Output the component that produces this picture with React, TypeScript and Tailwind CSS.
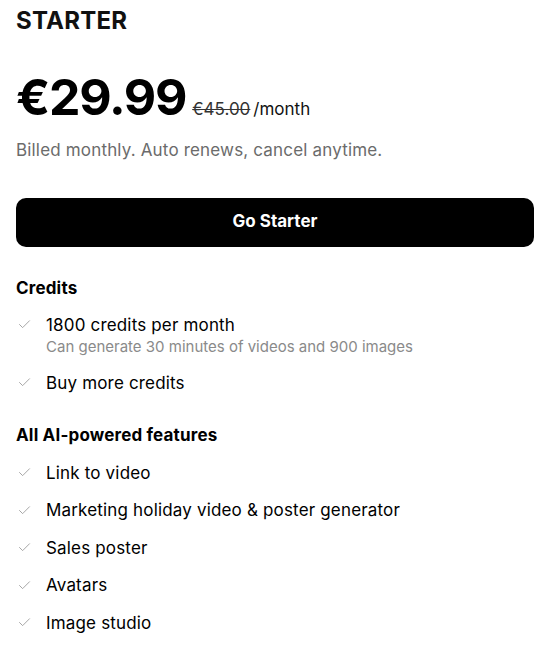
import { Check } from 'lucide-react';

const credits = [
  { title: '1800 credits per month', note: 'Can generate 30 minutes of videos and 900 images' },
  { title: 'Buy more credits' },
];

const features = [
  'Link to video',
  'Marketing holiday video & poster generator',
  'Sales poster',
  'Avatars',
  'Image studio',
];

function Item({ title, note }: { title: string; note?: string }) {
  return (
    <li className="flex items-start">
      <span className="flex h-6 w-[30px] shrink-0 items-center pl-[1px]">
        <Check size={15} strokeWidth={1.4} className="text-[#999]" />
      </span>
      <div>
        <p className="text-[17px] leading-6 tracking-[0.01em] text-black">{title}</p>
        {note ? <p className="text-[15px] leading-5 text-[#8a8a8a]">{note}</p> : null}
      </div>
    </li>
  );
}

export default function App() {
  return (
    <div className="min-h-[646px] bg-white pt-[5px] pr-[11px] pl-4 font-['Inter',sans-serif] text-black">
      <h1 className="text-2xl leading-8 font-bold tracking-[0.01em] text-[#111]">STARTER</h1>

      <div className="mt-[35px] flex items-baseline">
        <span className="text-[50px] leading-none font-bold tracking-[-0.025em]">€29.99</span>
        <span className="ml-[6px] text-[17px] text-[#333] line-through">€45.00</span>
        <span className="ml-[3px] text-[17px] text-[#111]">/month</span>
      </div>

      <p className="mt-[15px] text-[17px] leading-6 tracking-[0.01em] text-[#6b6b6b]">
        Billed monthly. Auto renews, cancel anytime.
      </p>

      <button
        type="button"
        className="mt-9 flex h-[49px] w-full items-center justify-center rounded-[10px] bg-black text-[17px] font-bold text-white"
      >
        Go Starter
      </button>

      <h2 className="mt-[29px] text-[17px] leading-6 font-bold tracking-[0.01em]">Credits</h2>
      <ul className="mt-[13px] flex flex-col gap-[14px]">
        {credits.map((c) => (
          <Item key={c.title} title={c.title} note={c.note} />
        ))}
      </ul>

      <h2 className="mt-[28px] text-[17px] leading-6 font-bold tracking-[0.01em]">All AI-powered features</h2>
      <ul className="mt-[14px] flex flex-col gap-[13.5px]">
        {features.map((f) => (
          <Item key={f} title={f} />
        ))}
      </ul>
    </div>
  );
}
